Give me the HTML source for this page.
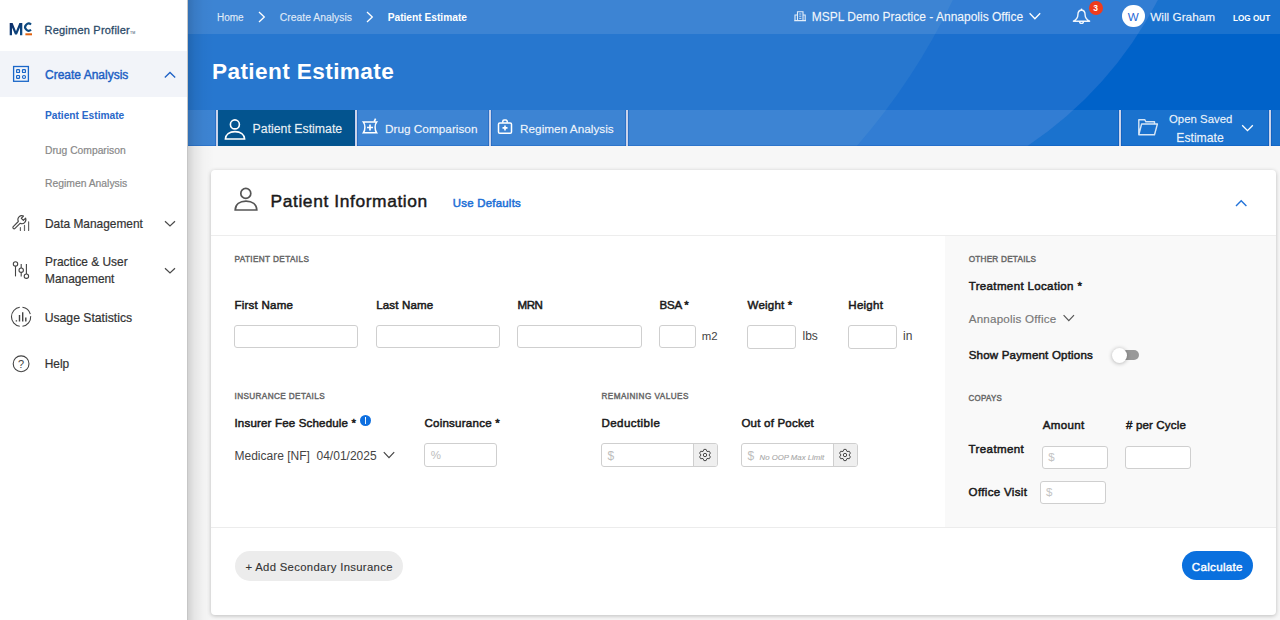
<!DOCTYPE html>
<html><head><meta charset="utf-8"><title>Patient Estimate</title>
<style>
html,body{margin:0;padding:0;width:1280px;height:620px;overflow:hidden;background:#f6f6f6;font-family:"Liberation Sans",sans-serif}
.t{position:absolute;line-height:1;white-space:nowrap}
.b{position:absolute}
</style></head><body>
<div class="b" style="left:187px;top:146px;width:1093px;height:474px;background:#f7f7f7"></div>
<div class="b" style="left:211px;top:170px;width:1065px;height:445px;background:#fff;border-radius:4px;box-shadow:0 1px 4px rgba(0,0,0,0.24)"></div>
<div class="b" style="left:945px;top:235px;width:331px;height:292px;background:#f9f9f9"></div>
<div class="b" style="left:211px;top:234.6px;width:1065px;height:1.0px;background:#ededed"></div>
<div class="b" style="left:211px;top:527px;width:1065px;height:1px;background:#ececec"></div>
<div class="b" style="left:187px;top:0;width:1093px;height:146px;background:#0062c9;overflow:hidden">
<svg width="1093" height="146" style="position:absolute;left:0;top:0">
<path d="M0,0 L970.9,0 A398,398 0 0 1 840.5,146 L0,146 Z" fill="#1b6fce"/>
<path d="M0,0 L765.8,0 A647,647 0 0 1 669.8,146 L0,146 Z" fill="#2777cf"/>
<rect x="0" y="0" width="1093" height="34" fill="rgba(255,255,255,0.1)"/>
<rect x="0" y="110" width="1093" height="36" fill="rgba(255,255,255,0.1)"/>
<rect x="0" y="145" width="1093" height="1" fill="rgba(0,70,180,0.25)"/>
</svg></div>
<div class="b" style="left:188px;top:0px;width:26px;height:620px;background:linear-gradient(to right,rgba(0,0,0,0.15),rgba(0,0,0,0.07) 25%,rgba(0,0,0,0.02) 60%,rgba(0,0,0,0) 100%)"></div>
<div class="b" style="left:0px;top:0px;width:188px;height:620px;background:#fff;border-right:1px solid #c6c6c6;box-sizing:border-box"></div>
<div class="b" style="left:0px;top:51px;width:187px;height:46px;background:#f2f4f9"></div>
<svg class="b" style="left:8px;top:20px" width="28" height="18" viewBox="8 20 28 18">
<defs><linearGradient id="lg" x1="0" y1="0" x2="1" y2="1"><stop offset="0" stop-color="#0b2a66"/><stop offset="1" stop-color="#0d4f86"/></linearGradient></defs>
<path d="M9.7,35.2 L9.7,22.9 L12.6,22.9 L16,31.2 L19.4,22.9 L22.3,22.9 L22.3,35.2 L20,35.2 L20,27.6 L17,34.6 L15,34.6 L12,27.6 L12,35.2 Z" fill="url(#lg)"/>
<path d="M31.04,24.50 A3.5,3.5 0 1 0 31.04,29.70" fill="none" stroke="#0d4a80" stroke-width="2.1"/>
<rect x="25.4" y="33.3" width="6.6" height="2" fill="#e0620f"/>
</svg>
<div class="t" style="left:44.5px;top:24.69px;font-size:11px;font-weight:400;color:#2c4b69;letter-spacing:0.22px;-webkit-text-stroke:0.3px #2c4b69">Regimen Profiler<span style="font-size:3.6px;letter-spacing:0;-webkit-text-stroke:0">TM</span></div>
<svg class="b" style="left:10px;top:63px" width="22" height="22" viewBox="10 63 22 22" fill="none" stroke="#1b67c9">
<rect x="13.6" y="66.5" width="14.8" height="14.8" stroke-width="1.3"/>
<rect x="16.6" y="69.6" width="2.9" height="2.9" rx="0.6" stroke-width="1.2"/>
<rect x="22.5" y="69.6" width="2.9" height="2.9" rx="0.6" stroke-width="1.2"/>
<rect x="16.6" y="75.5" width="2.9" height="2.9" rx="0.6" stroke-width="1.2"/>
<circle cx="24" cy="77" r="1.5" stroke-width="1.2"/>
</svg>
<div class="t" style="left:45.0px;top:68.54px;font-size:12px;font-weight:400;color:#1b5ec4;-webkit-text-stroke:0.4px #1b5ec4">Create Analysis</div>
<svg class="b" style="left:160px;top:66px" width="20" height="14" viewBox="160 66 20 14" fill="none" stroke="#1f62c6" stroke-width="1.3"><path d="M164.8,77.5 L170,72.5 L175.2,77.5"/></svg>
<div class="t" style="left:45.0px;top:110.77px;font-size:10.2px;font-weight:700;color:#2a68c9;">Patient Estimate</div>
<div class="t" style="left:45.0px;top:145.78px;font-size:10.3px;font-weight:400;color:#888;-webkit-text-stroke:0.2px #888">Drug Comparison</div>
<div class="t" style="left:45.0px;top:179.04px;font-size:10.35px;font-weight:400;color:#888;-webkit-text-stroke:0.2px #888">Regimen Analysis</div>
<svg class="b" style="left:8px;top:212px" width="28" height="22" viewBox="8 212 28 22" fill="none" stroke="#444" stroke-width="1.1" stroke-linecap="round" stroke-linejoin="round">
<path d="M13.24,226.59 L18.33,221.50 A4.0,4.0 0 0 1 23.51,216.04 L21.30,218.25 L23.35,220.30 L25.56,218.09 A4.0,4.0 0 0 1 20.10,223.27 L15.01,228.36 A1.25,1.25 0 0 1 13.24,226.59 Z"/>
<path d="M20.4,227.6 V230.4 M24.5,225.4 V230.4 M28.6,221.9 V230.4" stroke="#666" stroke-width="1.2"/>
</svg>
<div class="t" style="left:45.0px;top:218.83px;font-size:11.9px;font-weight:400;color:#333;-webkit-text-stroke:0.2px #333">Data Management</div>
<svg class="b" style="left:160px;top:216px" width="20" height="14" viewBox="160 216 20 14" fill="none" stroke="#4a4a4a" stroke-width="1.2"><path d="M165,221.2 L170,226 L175,221.2"/></svg>
<svg class="b" style="left:8px;top:258px" width="28" height="24" viewBox="8 258 28 24" fill="none" stroke="#444" stroke-width="1.1">
<circle cx="15.5" cy="263.9" r="2.2"/><path d="M15.5,266.1 V276.4"/>
<path d="M21.2,263.9 V268 M21.2,272.4 V276.4"/><circle cx="21.2" cy="270.2" r="2.2"/>
<path d="M26.4,263.9 V274"/><circle cx="26.4" cy="276.2" r="2.2"/>
</svg>
<div class="t" style="left:45.0px;top:256.73px;font-size:11.9px;font-weight:400;color:#333;-webkit-text-stroke:0.2px #333">Practice &amp; User</div>
<div class="t" style="left:45.0px;top:274.03px;font-size:11.9px;font-weight:400;color:#333;-webkit-text-stroke:0.2px #333">Management</div>
<svg class="b" style="left:160px;top:264px" width="20" height="14" viewBox="160 264 20 14" fill="none" stroke="#4a4a4a" stroke-width="1.2"><path d="M165,268.2 L170,273 L175,268.2"/></svg>
<svg class="b" style="left:8px;top:303px" width="28" height="28" viewBox="8 303 28 28" fill="none" stroke="#444" stroke-width="1.1">
<path d="M22.44,307.29 A9.6,9.6 0 0 1 30.33,314.15 M30.68,316.13 A9.6,9.6 0 0 1 22.44,326.31 M19.76,326.31 A9.6,9.6 0 0 1 19.76,307.29"/>
<path d="M16.4,320.2 V321.5 M19.5,315 V321.5 M22.7,312.3 V321.5 M25.8,317.5 V321.5" stroke-width="1.4"/>
</svg>
<div class="t" style="left:44.7px;top:311.57px;font-size:12.2px;font-weight:400;color:#333;-webkit-text-stroke:0.2px #333">Usage Statistics</div>
<svg class="b" style="left:8px;top:350px" width="28" height="28" viewBox="8 350 28 28" fill="none" stroke="#444" stroke-width="1.1">
<circle cx="21.1" cy="363.8" r="7.9"/>
</svg>
<div class="t" style="left:18.1px;top:358.59px;font-size:11px;font-weight:400;color:#444;">?</div>
<div class="t" style="left:44.7px;top:358.93px;font-size:11.9px;font-weight:400;color:#333;-webkit-text-stroke:0.2px #333">Help</div>
<div class="t" style="left:217.0px;top:12.93px;font-size:10.0px;font-weight:400;color:rgba(255,255,255,0.8);-webkit-text-stroke:0.25px rgba(255,255,255,0.5)">Home</div>
<svg class="b" style="left:254px;top:8px" width="16" height="18" viewBox="254 8 16 18" fill="none" stroke="#fff" stroke-width="1.3"><path d="M259,12 L264.3,17 L259,22"/></svg>
<div class="t" style="left:279.8px;top:12.90px;font-size:10.4px;font-weight:400;color:rgba(255,255,255,0.8);-webkit-text-stroke:0.25px rgba(255,255,255,0.5)">Create Analysis</div>
<svg class="b" style="left:362px;top:8px" width="16" height="18" viewBox="362 8 16 18" fill="none" stroke="#fff" stroke-width="1.3"><path d="M367,12 L372.3,17 L367,22"/></svg>
<div class="t" style="left:387.7px;top:12.57px;font-size:10.2px;font-weight:700;color:#fff;">Patient Estimate</div>
<svg class="b" style="left:792px;top:9px" width="16" height="14" viewBox="792 9 16 14" fill="none" stroke="rgba(255,255,255,0.85)" stroke-width="1.1">
<path d="M795,20.6 V15 H797.5 M797.5,20.6 V11.8 H803 V20.6 M803,15 H805.2 V20.6 M794.2,20.6 H806"/>
<path d="M799.2,14 H801.3 M799.2,16.2 H801.3 M799.2,18.4 H801.3" stroke-width="0.9"/>
</svg>
<div class="t" style="left:811.7px;top:11.24px;font-size:12px;font-weight:400;color:rgba(255,255,255,0.92);-webkit-text-stroke:0.3px rgba(255,255,255,0.55)">MSPL Demo Practice - Annapolis Office</div>
<svg class="b" style="left:1026px;top:9px" width="18" height="14" viewBox="1026 9 18 14" fill="none" stroke="#fff" stroke-width="1.3"><path d="M1029.6,13.3 L1034.9,18.7 L1040.2,13.3"/></svg>
<svg class="b" style="left:1070px;top:5px" width="24" height="22" viewBox="1070 5 24 22" fill="none" stroke="rgba(255,255,255,0.92)" stroke-width="1.4" stroke-linejoin="round">
<path d="M1081.5,10 C1078.8,10.3 1077.9,12.4 1077.9,14.8 C1077.9,18.2 1076.6,19.6 1073.4,21.2 H1089.6 C1086.4,19.6 1085.1,18.2 1085.1,14.8 C1085.1,12.4 1084.2,10.3 1081.5,10 Z"/>
<path d="M1081.5,8.6 V10"/>
<path d="M1079.6,21.5 A1.9,1.9 0 0 0 1083.4,21.5"/>
</svg>
<div class="b" style="left:1089px;top:0.7px;width:14px;height:14px;border-radius:50%;background:#f03c1c"></div>
<div class="t" style="left:1093.2px;top:4.00px;font-size:8.5px;font-weight:700;color:#fff;">3</div>
<div class="b" style="left:1121.8px;top:4.6px;width:22.8px;height:22.8px;border-radius:50%;background:#fff"></div>
<div class="t" style="left:1127.7px;top:11.48px;font-size:11.6px;font-weight:400;color:#1f68d6;">W</div>
<div class="t" style="left:1150.2px;top:11.71px;font-size:11.8px;font-weight:400;color:rgba(255,255,255,0.92);-webkit-text-stroke:0.3px rgba(255,255,255,0.55)">Will Graham</div>
<div class="t" style="left:1232.7px;top:13.07px;font-size:9.6px;font-weight:700;color:#fff;transform:scaleX(0.85);transform-origin:0 0">LOG OUT</div>
<div class="t" style="left:212.0px;top:61.47px;font-size:22.6px;font-weight:700;color:#fff;letter-spacing:0.4px">Patient Estimate</div>
<div class="b" style="left:216px;top:110px;width:2px;height:36px;background:#cbd3ea;box-shadow:1px 0 0 rgba(0,60,160,0.28),-1px 0 0 rgba(0,60,160,0.28)"></div>
<div class="b" style="left:218px;top:110px;width:137px;height:36px;background:#03548f"></div>
<div class="b" style="left:355px;top:110px;width:2px;height:36px;background:#cbd3ea;box-shadow:1px 0 0 rgba(0,60,160,0.28),-1px 0 0 rgba(0,60,160,0.28)"></div>
<div class="b" style="left:489px;top:110px;width:2px;height:36px;background:#cbd3ea;box-shadow:1px 0 0 rgba(0,60,160,0.28),-1px 0 0 rgba(0,60,160,0.28)"></div>
<div class="b" style="left:626px;top:110px;width:2px;height:36px;background:#cbd3ea;box-shadow:1px 0 0 rgba(0,60,160,0.28),-1px 0 0 rgba(0,60,160,0.28)"></div>
<div class="b" style="left:1119px;top:110px;width:2px;height:36px;background:#cbd3ea;box-shadow:1px 0 0 rgba(0,60,160,0.28),-1px 0 0 rgba(0,60,160,0.28)"></div>
<div class="b" style="left:1269px;top:110px;width:2px;height:36px;background:#cbd3ea;box-shadow:1px 0 0 rgba(0,60,160,0.28),-1px 0 0 rgba(0,60,160,0.28)"></div>
<svg class="b" style="left:222px;top:116px" width="26" height="26" viewBox="222 116 26 26" fill="none" stroke="#fff" stroke-width="1.6">
<circle cx="234.9" cy="124.4" r="4.5"/>
<path d="M225.4,139 C225.6,134.5 229.5,131.6 235,131.6 C240.5,131.6 244.4,134.5 244.6,139 Z"/>
</svg>
<div class="t" style="left:252.6px;top:123.09px;font-size:12.3px;font-weight:400;color:rgba(255,255,255,0.9);-webkit-text-stroke:0.3px rgba(255,255,255,0.55)">Patient Estimate</div>
<svg class="b" style="left:358px;top:114px" width="24" height="24" viewBox="358 114 24 24" fill="none" stroke="#fff" stroke-width="1.5">
<path d="M363.4,122.1 H376.6 C374.6,124.6 374.6,130.1 376.6,132.7 H363.4 C365.4,130.1 365.4,124.6 363.4,122.1 Z"/>
<path d="M374.2,121.6 L375.6,118.6" stroke-width="1.6"/>
<path d="M370,124.5 V130.6 M367,127.5 H373" stroke-width="1.7"/>
</svg>
<div class="t" style="left:385.0px;top:123.51px;font-size:11.8px;font-weight:400;color:rgba(255,255,255,0.9);-webkit-text-stroke:0.3px rgba(255,255,255,0.55)">Drug Comparison</div>
<svg class="b" style="left:492px;top:114px" width="24" height="24" viewBox="492 114 24 24" fill="none" stroke="#fff" stroke-width="1.5">
<rect x="498.5" y="123" width="13" height="10.2" rx="1.3"/>
<path d="M502.8,122.8 V121.3 A1.2,1.2 0 0 1 504,120.1 H506 A1.2,1.2 0 0 1 507.2,121.3 V122.8"/>
<path d="M505,125.4 V130.4 M502.5,127.9 H507.5" stroke-width="1.6"/>
</svg>
<div class="t" style="left:520.0px;top:123.51px;font-size:11.8px;font-weight:400;color:rgba(255,255,255,0.9);-webkit-text-stroke:0.3px rgba(255,255,255,0.55)">Regimen Analysis</div>
<svg class="b" style="left:1134px;top:114px" width="28" height="26" viewBox="1134 114 28 26" fill="none" stroke="rgba(255,255,255,0.82)" stroke-width="1.4" stroke-linejoin="round">
<path d="M1154.5,123.8 V121.8 H1145.9 L1144.7,119.7 H1138.8 V134.7 H1154.5 L1157.4,124 H1141.6 L1138.8,134.7"/>
</svg>
<div class="t" style="left:1169.0px;top:114.25px;font-size:11.4px;font-weight:400;color:rgba(255,255,255,0.9);-webkit-text-stroke:0.3px rgba(255,255,255,0.55)">Open Saved</div>
<div class="t" style="left:1176.3px;top:131.57px;font-size:12.2px;font-weight:400;color:rgba(255,255,255,0.9);-webkit-text-stroke:0.3px rgba(255,255,255,0.55)">Estimate</div>
<svg class="b" style="left:1238px;top:120px" width="18" height="14" viewBox="1238 120 18 14" fill="none" stroke="#fff" stroke-width="1.3"><path d="M1242.2,125.2 L1247.5,130.6 L1252.8,125.2"/></svg>
<svg class="b" style="left:230px;top:184px" width="32" height="30" viewBox="230 184 32 30" fill="none" stroke="#555" stroke-width="1.7">
<circle cx="245.8" cy="193.4" r="5"/>
<path d="M235.2,210 C235.4,204.5 239.8,201.2 246,201.2 C252.2,201.2 256.6,204.5 256.8,210 Z"/>
</svg>
<div class="t" style="left:270.5px;top:193.27px;font-size:17.4px;font-weight:400;color:#1a1a1a;-webkit-text-stroke:0.45px #1a1a1a;letter-spacing:0.6px">Patient Information</div>
<div class="t" style="left:452.7px;top:197.95px;font-size:11.4px;font-weight:400;color:#1c6fd6;-webkit-text-stroke:0.5px #1c6fd6;letter-spacing:0.26px">Use Defaults</div>
<svg class="b" style="left:1232px;top:194.7px" width="18" height="14" viewBox="1232 194 18 14" fill="none" stroke="#2273d9" stroke-width="1.4"><path d="M1236,205 L1241.2,199.8 L1246.4,205"/></svg>
<div class="t" style="left:234.4px;top:255.66px;font-size:8.2px;font-weight:400;color:#676767;-webkit-text-stroke:0.4px #676767;letter-spacing:0.39px;transform:scaleY(1.12);transform-origin:0 6.94px">PATIENT DETAILS</div>
<div class="t" style="left:234.4px;top:299.52px;font-size:11.55px;font-weight:400;color:#1a1a1a;-webkit-text-stroke:0.5px #1a1a1a;letter-spacing:0.23px">First Name</div>
<div class="t" style="left:376.2px;top:299.52px;font-size:11.55px;font-weight:400;color:#1a1a1a;-webkit-text-stroke:0.5px #1a1a1a;letter-spacing:0.14px">Last Name</div>
<div class="t" style="left:517.6px;top:299.52px;font-size:11.55px;font-weight:400;color:#1a1a1a;-webkit-text-stroke:0.5px #1a1a1a;letter-spacing:-0.51px">MRN</div>
<div class="t" style="left:659.5px;top:299.52px;font-size:11.55px;font-weight:400;color:#1a1a1a;-webkit-text-stroke:0.5px #1a1a1a;letter-spacing:-0.24px">BSA *</div>
<div class="t" style="left:747.5px;top:299.52px;font-size:11.55px;font-weight:400;color:#1a1a1a;-webkit-text-stroke:0.5px #1a1a1a;letter-spacing:0.20px">Weight *</div>
<div class="t" style="left:848.3px;top:299.52px;font-size:11.55px;font-weight:400;color:#1a1a1a;-webkit-text-stroke:0.5px #1a1a1a;letter-spacing:0.25px">Height</div>
<div class="b" style="left:234px;top:325px;width:124px;height:23px;background:#fff;border:1px solid #cfcfcf;border-radius:3px;box-sizing:border-box"></div>
<div class="b" style="left:376px;top:325px;width:124px;height:23px;background:#fff;border:1px solid #cfcfcf;border-radius:3px;box-sizing:border-box"></div>
<div class="b" style="left:517px;top:325px;width:125px;height:23px;background:#fff;border:1px solid #cfcfcf;border-radius:3px;box-sizing:border-box"></div>
<div class="b" style="left:659px;top:325px;width:37px;height:23px;background:#fff;border:1px solid #cfcfcf;border-radius:3px;box-sizing:border-box"></div>
<div class="t" style="left:701.8px;top:331.35px;font-size:11.4px;font-weight:400;color:#444;">m2</div>
<div class="b" style="left:747px;top:325px;width:49px;height:24px;background:#fff;border:1px solid #cfcfcf;border-radius:3px;box-sizing:border-box"></div>
<div class="t" style="left:802.5px;top:329.54px;font-size:12px;font-weight:400;color:#444;">lbs</div>
<div class="b" style="left:848px;top:325px;width:49px;height:24px;background:#fff;border:1px solid #cfcfcf;border-radius:3px;box-sizing:border-box"></div>
<div class="t" style="left:903.0px;top:329.54px;font-size:12px;font-weight:400;color:#444;">in</div>
<div class="t" style="left:234.5px;top:393.06px;font-size:8.2px;font-weight:400;color:#676767;-webkit-text-stroke:0.4px #676767;letter-spacing:0.38px;transform:scaleY(1.12);transform-origin:0 6.94px">INSURANCE DETAILS</div>
<div class="t" style="left:234.5px;top:417.82px;font-size:11.55px;font-weight:400;color:#1a1a1a;-webkit-text-stroke:0.5px #1a1a1a;letter-spacing:0.16px">Insurer Fee Schedule *</div>
<div class="b" style="left:359.8px;top:414.9px;width:11.5px;height:11.5px;border-radius:50%;background:#0e6fe0"></div>
<div class="b" style="left:364.9px;top:417.4px;width:1.3px;height:1.3px;background:#fff"></div>
<div class="b" style="left:364.9px;top:419.4px;width:1.3px;height:4.2px;background:rgba(255,255,255,0.9)"></div>
<div class="t" style="left:424.4px;top:417.82px;font-size:11.55px;font-weight:400;color:#1a1a1a;-webkit-text-stroke:0.5px #1a1a1a;letter-spacing:0.24px">Coinsurance *</div>
<div class="t" style="left:234.5px;top:449.54px;font-size:12px;font-weight:400;color:#444;letter-spacing:0px">Medicare [NF]&nbsp; 04/01/2025</div>
<svg class="b" style="left:380px;top:448px" width="18" height="14" viewBox="380 448 18 14" fill="none" stroke="#444" stroke-width="1.2"><path d="M383.8,452.2 L389,457.6 L394.2,452.2"/></svg>
<div class="b" style="left:424px;top:443px;width:73px;height:24px;background:#fff;border:1px solid #cfcfcf;border-radius:3px;box-sizing:border-box"></div>
<div class="t" style="left:430.7px;top:449.97px;font-size:11.5px;font-weight:400;color:#bdbdbd;">%</div>
<div class="t" style="left:601.4px;top:392.76px;font-size:8.2px;font-weight:400;color:#676767;-webkit-text-stroke:0.4px #676767;letter-spacing:0.44px;transform:scaleY(1.12);transform-origin:0 6.94px">REMAINING VALUES</div>
<div class="t" style="left:601.4px;top:417.82px;font-size:11.55px;font-weight:400;color:#1a1a1a;-webkit-text-stroke:0.5px #1a1a1a;letter-spacing:0.44px">Deductible</div>
<div class="t" style="left:741.4px;top:417.82px;font-size:11.55px;font-weight:400;color:#1a1a1a;-webkit-text-stroke:0.5px #1a1a1a;letter-spacing:0.20px">Out of Pocket</div>
<div class="b" style="left:601px;top:443px;width:117px;height:24px;background:#fff;border:1px solid #cfcfcf;border-radius:3px;box-sizing:border-box;overflow:hidden"></div>
<div class="b" style="left:693px;top:444px;width:24px;height:22px;background:#efefef;border-left:1px solid #cfcfcf;border-radius:0 2px 2px 0;box-sizing:border-box"></div>
<div class="t" style="left:607.5px;top:449.84px;font-size:12px;font-weight:400;color:#bdbdbd;">$</div>
<svg class="b" style="left:697px;top:447px" width="16" height="16" viewBox="-8 -8 16 16" fill="none" stroke="#4a4a4a" stroke-width="1">
<path d="M-2.00,-3.46 L-1.09,-5.60 L1.09,-5.60 L2.00,-3.46 L2.00,-3.46 L4.30,-3.74 L5.39,-1.86 L4.00,0.00 L4.00,0.00 L5.39,1.86 L4.30,3.74 L2.00,3.46 L2.00,3.46 L1.09,5.60 L-1.09,5.60 L-2.00,3.46 L-2.00,3.46 L-4.30,3.74 L-5.39,1.86 L-4.00,0.00 L-4.00,-0.00 L-5.39,-1.86 L-4.30,-3.74 L-2.00,-3.46 Z" stroke-linejoin="round"/>
<circle cx="0" cy="0" r="1.7"/></svg>
<div class="b" style="left:741px;top:443px;width:117px;height:24px;background:#fff;border:1px solid #cfcfcf;border-radius:3px;box-sizing:border-box;overflow:hidden"></div>
<div class="b" style="left:833px;top:444px;width:24px;height:22px;background:#efefef;border-left:1px solid #cfcfcf;border-radius:0 2px 2px 0;box-sizing:border-box"></div>
<div class="t" style="left:747.5px;top:449.84px;font-size:12px;font-weight:400;color:#bdbdbd;">$</div>
<div class="t" style="left:759.5px;top:453.70px;font-size:7.8px;font-weight:400;color:#a8a8a8;font-style:italic;-webkit-text-stroke:0.1px #a8a8a8">No OOP Max Limit</div>
<svg class="b" style="left:837px;top:447px" width="16" height="16" viewBox="-8 -8 16 16" fill="none" stroke="#4a4a4a" stroke-width="1">
<path d="M-2.00,-3.46 L-1.09,-5.60 L1.09,-5.60 L2.00,-3.46 L2.00,-3.46 L4.30,-3.74 L5.39,-1.86 L4.00,0.00 L4.00,0.00 L5.39,1.86 L4.30,3.74 L2.00,3.46 L2.00,3.46 L1.09,5.60 L-1.09,5.60 L-2.00,3.46 L-2.00,3.46 L-4.30,3.74 L-5.39,1.86 L-4.00,0.00 L-4.00,-0.00 L-5.39,-1.86 L-4.30,-3.74 L-2.00,-3.46 Z" stroke-linejoin="round"/>
<circle cx="0" cy="0" r="1.7"/></svg>
<div class="t" style="left:968.7px;top:255.56px;font-size:8.2px;font-weight:400;color:#676767;-webkit-text-stroke:0.4px #676767;letter-spacing:0.23px;transform:scaleY(1.12);transform-origin:0 6.94px">OTHER DETAILS</div>
<div class="t" style="left:968.7px;top:280.52px;font-size:11.55px;font-weight:400;color:#1a1a1a;-webkit-text-stroke:0.5px #1a1a1a;letter-spacing:0.34px">Treatment Location *</div>
<div class="t" style="left:968.7px;top:312.98px;font-size:11.6px;font-weight:400;color:#777;-webkit-text-stroke:0.15px #777;letter-spacing:0.22px">Annapolis Office</div>
<svg class="b" style="left:1060px;top:311px" width="18" height="14" viewBox="1060 311 18 14" fill="none" stroke="#555" stroke-width="1.2"><path d="M1063.6,315.2 L1068.8,320.6 L1074,315.2"/></svg>
<div class="t" style="left:968.7px;top:349.92px;font-size:11.55px;font-weight:400;color:#1a1a1a;-webkit-text-stroke:0.5px #1a1a1a;letter-spacing:0.18px">Show Payment Options</div>
<div class="b" style="left:1113px;top:350px;width:26px;height:10px;background:#999;border-radius:5px"></div>
<div class="b" style="left:1112px;top:347.7px;width:15px;height:15px;border-radius:50%;background:#fff;box-shadow:0 0.5px 4px rgba(0,0,0,0.3)"></div>
<div class="t" style="left:968.6px;top:395.11px;font-size:7.9px;font-weight:400;color:#676767;-webkit-text-stroke:0.4px #676767;letter-spacing:0.29px;transform:scaleY(1.12);transform-origin:0 6.69px">COPAYS</div>
<div class="t" style="left:1042.7px;top:419.72px;font-size:11.55px;font-weight:400;color:#1a1a1a;-webkit-text-stroke:0.5px #1a1a1a;letter-spacing:0.33px">Amount</div>
<div class="t" style="left:1126.0px;top:419.72px;font-size:11.55px;font-weight:400;color:#1a1a1a;-webkit-text-stroke:0.5px #1a1a1a;letter-spacing:0.14px"># per Cycle</div>
<div class="t" style="left:968.6px;top:444.42px;font-size:11.55px;font-weight:400;color:#1a1a1a;-webkit-text-stroke:0.5px #1a1a1a;letter-spacing:0.37px">Treatment</div>
<div class="b" style="left:1042px;top:446px;width:66px;height:23px;background:#fff;border:1px solid #cfcfcf;border-radius:3px;box-sizing:border-box"></div>
<div class="t" style="left:1048.3px;top:452.27px;font-size:11.5px;font-weight:400;color:#c4c4c4;">$</div>
<div class="b" style="left:1125px;top:446px;width:66px;height:23px;background:#fff;border:1px solid #cfcfcf;border-radius:3px;box-sizing:border-box"></div>
<div class="t" style="left:968.6px;top:486.82px;font-size:11.55px;font-weight:400;color:#1a1a1a;-webkit-text-stroke:0.5px #1a1a1a;letter-spacing:0.32px">Office Visit</div>
<div class="b" style="left:1040px;top:481px;width:66px;height:23px;background:#fff;border:1px solid #cfcfcf;border-radius:3px;box-sizing:border-box"></div>
<div class="t" style="left:1046.0px;top:487.27px;font-size:11.5px;font-weight:400;color:#c4c4c4;">$</div>
<div class="b" style="left:234.5px;top:551.2px;width:168.5px;height:29.399999999999977px;background:#ececec;border-radius:15px"></div>
<div class="t" style="left:245.4px;top:561.83px;font-size:11.3px;font-weight:400;color:#333;-webkit-text-stroke:0.1px #333;letter-spacing:0.33px">+ Add Secondary Insurance</div>
<div class="b" style="left:1181.5px;top:551.3px;width:71.5px;height:29.0px;background:#0a70de;border-radius:15px"></div>
<div class="t" style="left:1191.8px;top:561.08px;font-size:11.6px;font-weight:400;color:#fff;-webkit-text-stroke:0.4px #fff;letter-spacing:0.3px">Calculate</div>
</body></html>
